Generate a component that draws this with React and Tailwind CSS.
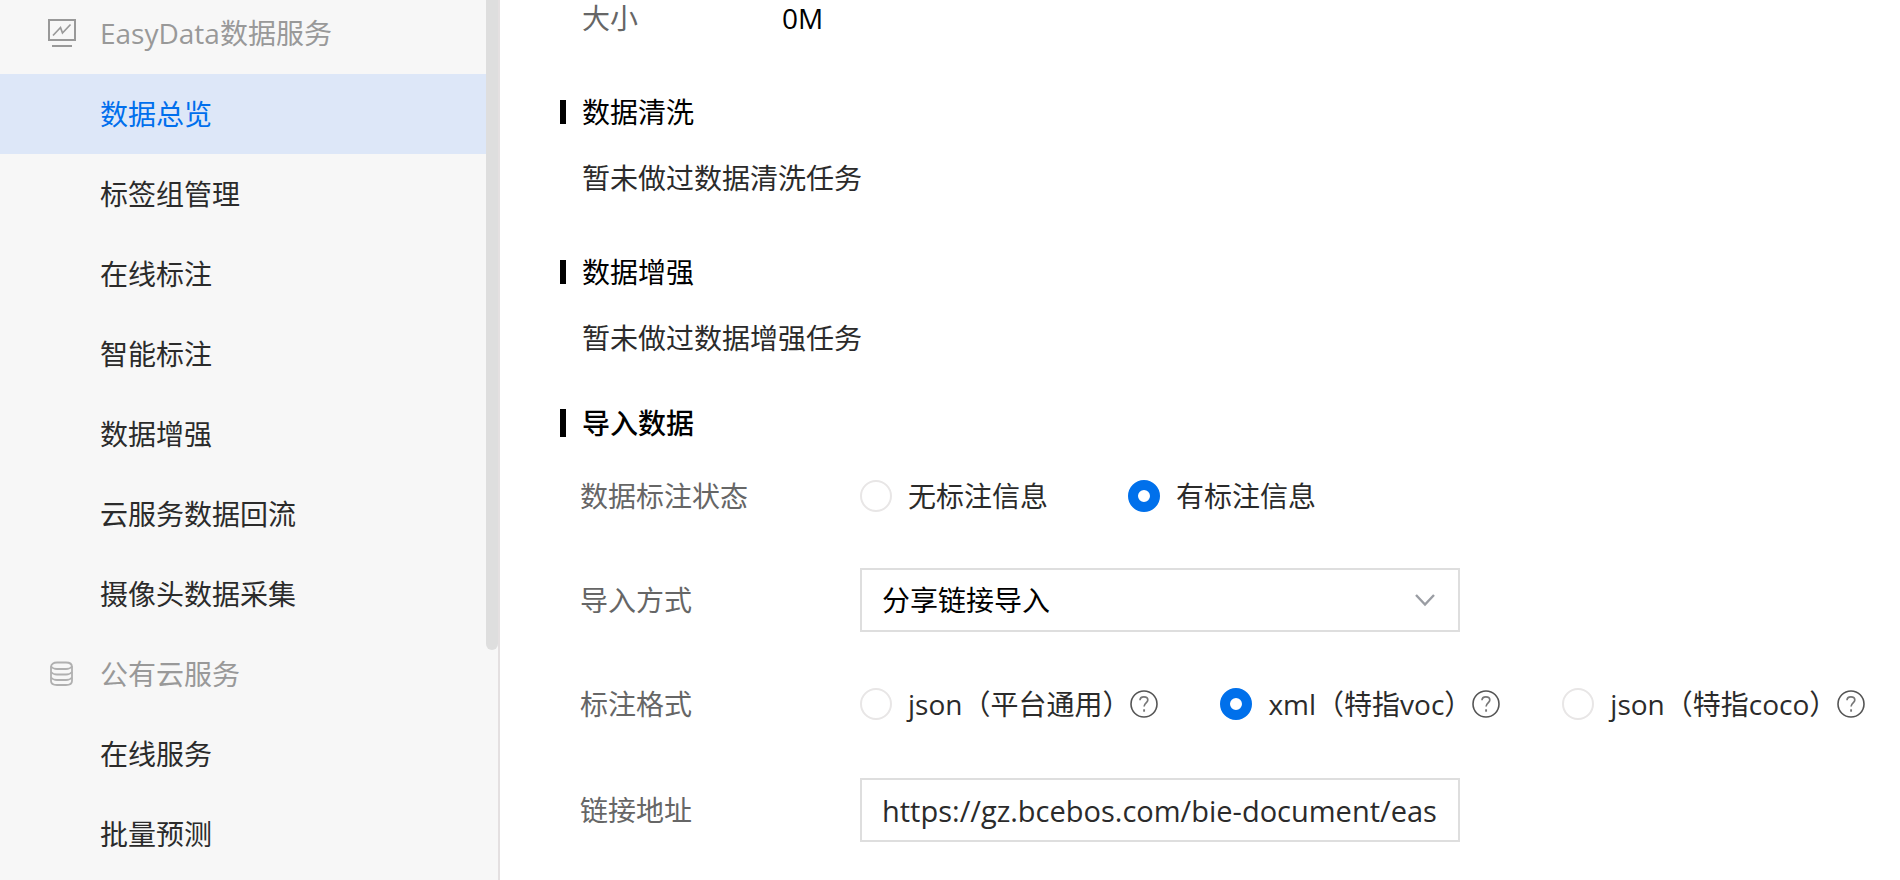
import { useState } from "react";

const groups = [
  {
    title: "EasyData数据服务",
    icon: "monitor",
    items: ["数据总览", "标签组管理", "在线标注", "智能标注", "数据增强", "云服务数据回流", "摄像头数据采集"],
  },
  { title: "公有云服务", icon: "database", items: ["在线服务", "批量预测"] },
];

function MonitorIcon() {
  return (
    <svg width="28" height="28" viewBox="0 0 28 28" fill="none" stroke="#999999" strokeWidth="2" aria-hidden="true">
      <rect x="1" y="1" width="26" height="20" />
      <path d="M4 27h20" />
      <path d="M5 16.5 12.500 8.500 14.500 14 22.500 5.500" strokeWidth="1.700" />
    </svg>
  );
}

function DatabaseIcon() {
  return (
    <svg width="28" height="28" viewBox="0 0 28 28" fill="none" stroke="#b0b0b0" strokeWidth="1.800" aria-hidden="true">
      <path d="M3 7c0-3 2.500-4.500 6-4.500h9c3.500 0 6 1.500 6 4.500M3 6v15c0 2.500 2.500 4 6 4h9c3.500 0 6-1.500 6-4V6" />
      <path d="M3 6.500c1.500 1.800 3.500 2.500 6 2.500h9c2.500 0 4.500-.7 6-2.500M3 12c1.500 1.800 3.500 2.500 6 2.500h9c2.500 0 4.500-.7 6-2.500M3 17.500c1.500 1.800 3.500 2.500 6 2.500h9c2.500 0 4.500-.7 6-2.500" />
    </svg>
  );
}

function HelpIcon() {
  return (
    <svg width="28" height="28" viewBox="0 0 28 28" fill="none" stroke="#555555" aria-hidden="true">
      <circle cx="14" cy="14" r="13" strokeWidth="1.600" />
      <path d="M10 10.200c0-2 1.500-3.400 3.900-3.400s3.900 1.300 3.900 3.200c0 2.700-3.700 3.100-3.700 6.500" stroke="#777777" strokeWidth="1.700" />
      <path d="M14.100 19.300v2.400" stroke="#777777" strokeWidth="1.900" />
    </svg>
  );
}

function Sidebar() {
  return (
    <aside className="flex w-[500px] shrink-0 border-r-2 border-[#e4e0e1] bg-[#f7f7f7]">
      <nav className="min-w-0 flex-1">
        {groups.map((group, g) => (
          <section key={group.title}>
            <h2
              className={
                g === 0
                  ? "flex h-[74px] items-center gap-6 pb-2 pl-12 text-[#999999]"
                  : "flex h-20 items-center gap-6 pl-12 text-[#999999]"
              }
            >
              {group.icon === "monitor" ? <MonitorIcon /> : <DatabaseIcon />}
              {group.title}
            </h2>
            <ul>
              {group.items.map((item, i) => (
                <li key={item}>
                  <a
                    href="#"
                    className={
                      g === 0 && i === 0
                        ? "flex h-20 items-center bg-[#dde7f8] pl-[100px] text-[#006fed]"
                        : "flex h-20 items-center pl-[100px] text-[#2b2b2b]"
                    }
                  >
                    {item}
                  </a>
                </li>
              ))}
            </ul>
          </section>
        ))}
      </nav>
      <div className="w-3 shrink-0">
        <div className="h-[650px] rounded-b-md bg-[#dedede]" />
      </div>
    </aside>
  );
}

function Heading({ strong, children }) {
  return (
    <h3 className={strong ? "flex h-10 items-center gap-4 font-medium text-black" : "flex h-10 items-center gap-4 text-black"}>
      <span className={strong ? "h-7 w-1.5 bg-black" : "h-6 w-1.5 bg-black"} />
      {children}
    </h3>
  );
}

function Radio({ name, label, checked, onChange, help }) {
  return (
    <div className="flex items-center">
      <label className="flex items-center gap-4 whitespace-nowrap text-[#2b2b2b]">
        <input
          type="radio"
          name={name}
          checked={checked}
          onChange={onChange}
          className="size-8 shrink-0 appearance-none rounded-full border-2 border-[#e8e6e6] bg-white checked:border-10 checked:border-[#0070eb]"
        />
        {label}
      </label>
      {help && (
        <button type="button" aria-label="说明" className="shrink-0">
          <HelpIcon />
        </button>
      )}
    </div>
  );
}

function Row({ label, htmlFor, children }) {
  return (
    <div className="flex min-h-16 items-center">
      {htmlFor ? (
        <label htmlFor={htmlFor} className="w-[280px] shrink-0 text-[#666666]">
          {label}
        </label>
      ) : (
        <span className="w-[280px] shrink-0 text-[#666666]">{label}</span>
      )}
      {children}
    </div>
  );
}

const states = ["无标注信息", "有标注信息"];
const formats = ["json（平台通用）", "xml（特指voc）", "json（特指coco）"];

export default function App() {
  const [state, setState] = useState(1);
  const [format, setFormat] = useState(1);
  return (
    <div className="flex min-h-screen bg-white font-['Open_Sans','Noto_Sans_CJK_SC',sans-serif] text-[28px] leading-10 font-[370]">
      <Sidebar />
      <main className="min-w-0 flex-1 pr-6 pl-[60px]">
        <dl className="flex h-9 items-center pl-[22px]">
          <dt className="w-[200px] text-[#666666]">大小</dt>
          <dd className="text-black">0M</dd>
        </dl>
        <section className="mt-14">
          <Heading>数据清洗</Heading>
          <p className="mt-[26px] pl-[22px] text-[#2b2b2b]">暂未做过数据清洗任务</p>
        </section>
        <section className="mt-[54px]">
          <Heading>数据增强</Heading>
          <p className="mt-[26px] pl-[22px] text-[#2b2b2b]">暂未做过数据增强任务</p>
        </section>
        <section className="mt-[45px]">
          <Heading strong>导入数据</Heading>
          <form className="mt-[21px] flex flex-col gap-10 pl-5">
            <Row label="数据标注状态">
              <div className="flex gap-20">
                {states.map((s, i) => (
                  <Radio key={s} name="state" label={s} checked={state === i} onChange={() => setState(i)} />
                ))}
              </div>
            </Row>
            <Row label="导入方式" htmlFor="method">
              <div className="relative w-[600px]">
                <select
                  id="method"
                  className="h-16 w-full appearance-none rounded-none border-2 border-[#dedede] bg-white px-5 text-black"
                >
                  <option>分享链接导入</option>
                </select>
                <svg
                  className="pointer-events-none absolute top-6 right-6"
                  width="22"
                  height="16"
                  viewBox="0 0 22 16"
                  fill="none"
                  stroke="#9a9da3"
                  strokeWidth="2.400"
                  aria-hidden="true"
                >
                  <path d="M2 3 11 12.500 20 3" />
                </svg>
              </div>
            </Row>
            <Row label="标注格式">
              <div className="flex gap-[62px]">
                {formats.map((f, i) => (
                  <Radio key={f} name="format" label={f} checked={format === i} onChange={() => setFormat(i)} help />
                ))}
              </div>
            </Row>
            <Row label="链接地址" htmlFor="url">
              <input
                id="url"
                type="text"
                defaultValue="https://gz.bcebos.com/bie-document/eas"
                className="my-0.5 h-16 w-[600px] border-2 border-[#dedede] bg-white px-5 text-[29px] text-[#2b2b2b]"
              />
            </Row>
          </form>
        </section>
      </main>
    </div>
  );
}
